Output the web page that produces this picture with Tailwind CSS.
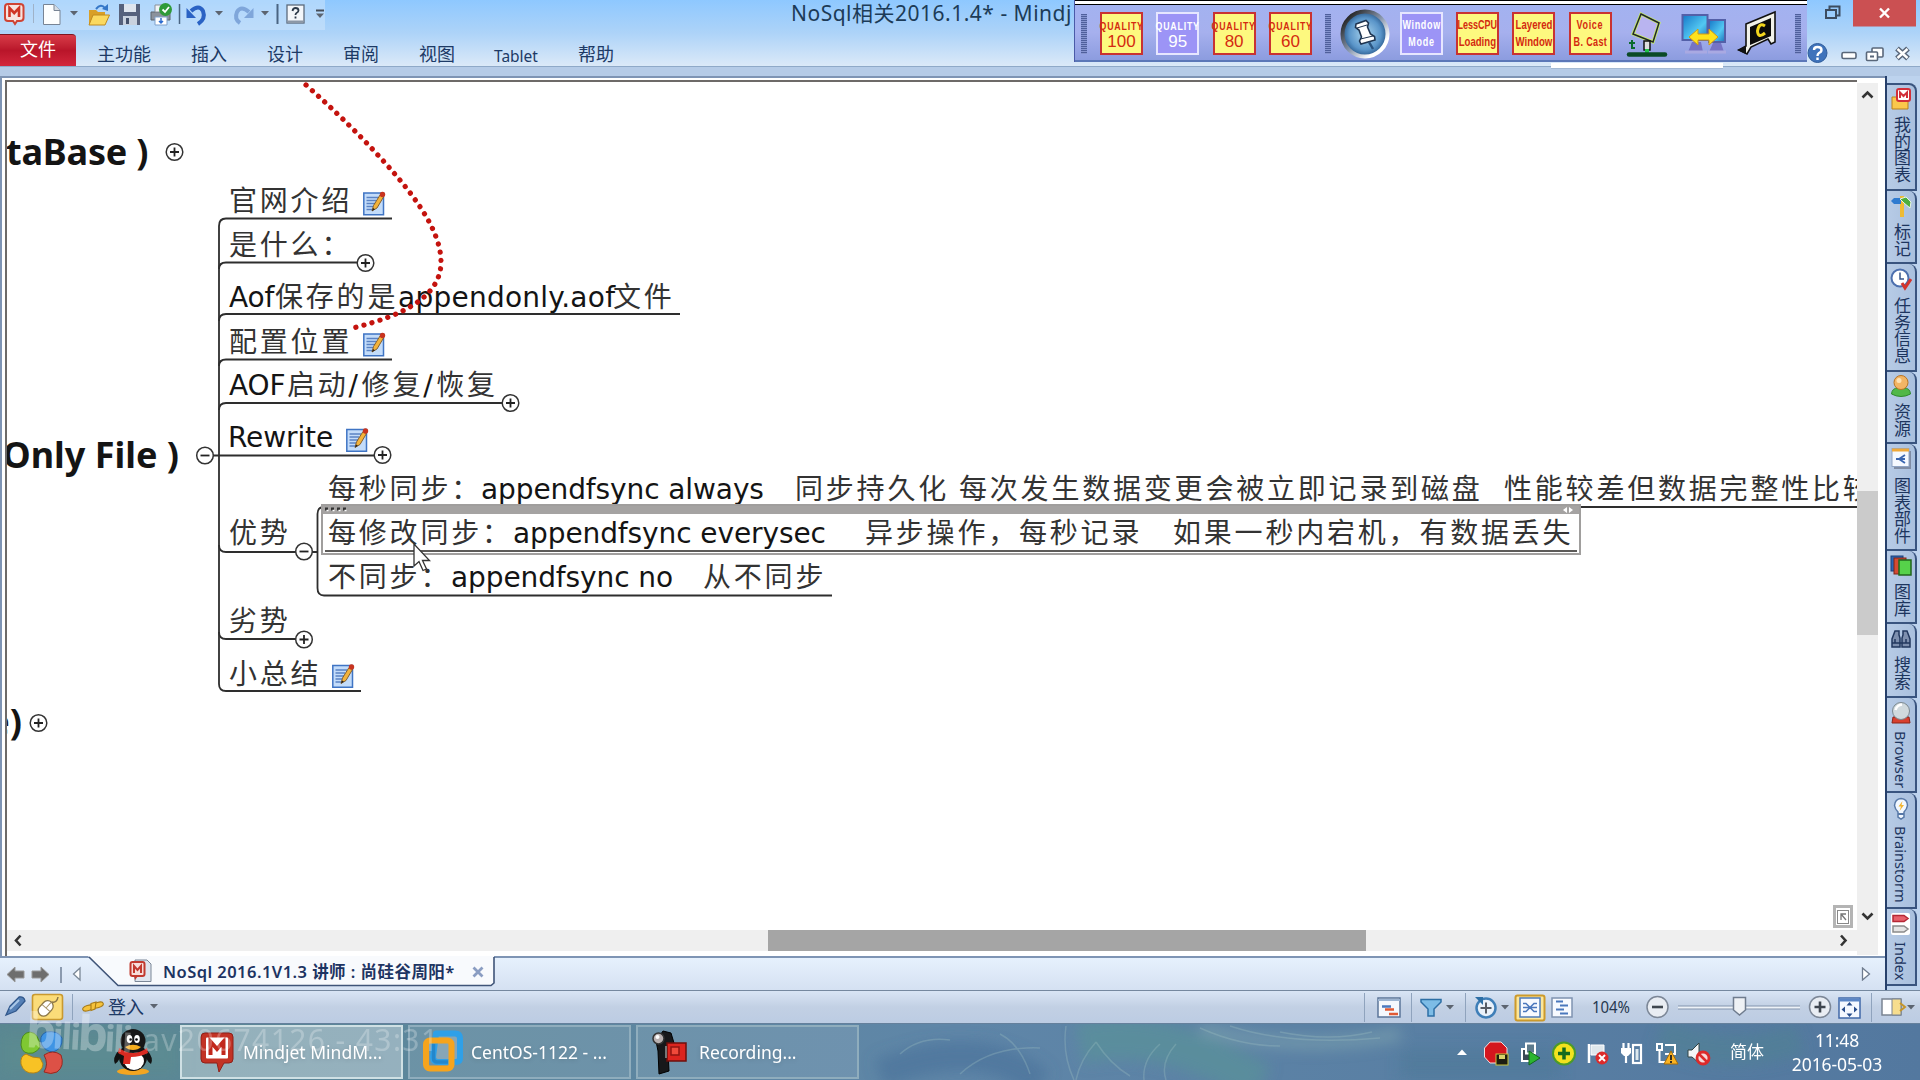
<!DOCTYPE html>
<html lang="zh-CN">
<head>
<meta charset="utf-8">
<title>NoSql相关2016.1.4* - Mindjet</title>
<script src="https://cdn.jsdelivr.net/npm/@tailwindcss/browser@4"></script>
</head>
<body class="w-[1920px] h-[1080px] overflow-hidden flex flex-col bg-[#c4d8ef] font-['Noto_Sans','Noto_Sans_CJK_SC',sans-serif] text-[#1d3a66]">

<svg width="0" height="0" class="absolute">
  <defs>
    <g id="plus"><circle r="8.3" fill="#fff" stroke="#333" stroke-width="1.5"/><path d="M-4.5 0H4.5M0-4.5V4.5" stroke="#222" stroke-width="1.8"/></g>
    <g id="minus"><circle r="8.3" fill="#fff" stroke="#333" stroke-width="1.5"/><path d="M-4.5 0H4.5" stroke="#222" stroke-width="1.8"/></g>
    <g id="note"><path d="M.8 1.5H20.5V23.200H.8Z" fill="#c3dcfa" stroke="#3f74c4" stroke-width="1.5"/><path d="M3.500 6H15M3.500 9H13M3.500 12H12M3.500 15H10M3.500 18H9" stroke="#5b83c4" stroke-width="1.3"/><path d="M9 19.500L10.500 14 17 3.500 20.500 5.500 14 16.500Z" fill="#f3b33b" stroke="#7a5526" stroke-width=".9"/><path d="M9 19.500L10 16.500 12 17.700Z" fill="#222"/><circle cx="19.500" cy="3" r="2.700" fill="#c8341f"/></g>
    <path id="drop" d="M0 0H8L4 4.500Z" fill="#5c6470"/>
    <radialGradient id="pinball"><stop offset="0" stop-color="#a9d4ee"/><stop offset=".7" stop-color="#5a95c9"/><stop offset="1" stop-color="#2a5a8c"/></radialGradient>
    <linearGradient id="ring" x1="0" y1="0" x2="1" y2="1"><stop offset="0.1" stop-color="#222"/><stop offset=".5" stop-color="#8796ad"/><stop offset=".8" stop-color="#fff"/></linearGradient>
    <linearGradient id="screen" x1="0" y1="0" x2="1" y2="1"><stop offset="0" stop-color="#1577c8"/><stop offset=".6" stop-color="#53c8f2"/><stop offset="1" stop-color="#1c6fb8"/></linearGradient>
  </defs>
</svg>

<!-- title bar and ribbon tabs -->
<header class="relative h-[66px] shrink-0 bg-linear-to-b from-[#8ec8ff] via-[#add3f8] to-[#dbe9f8]">
  <div class="h-[34px] flex items-start">
    <svg width="340" height="30" viewBox="0 0 340 30" class="shrink-0">
      <rect x="0" y="0" width="325" height="30" fill="#d6e8fa" opacity=".45"/>
      <path d="M8 4H20Q23.500 4 23.500 7V18Q23.500 21 20 21H17L15 24 13 21H8Q5 21 5 18V7Q5 4 8 4Z" fill="#f7e3df" stroke="#cf4434" stroke-width="2"/><path d="M9.500 17V8L14.200 13 19 8V17" fill="none" stroke="#cf3424" stroke-width="2.600"/>
      <path d="M33.500 4V23" stroke="#9fb2c8"/>
      <path d="M43.500 4.500H54L60 10.500V24.500H43.500Z" fill="#fdfefe" stroke="#788494"/><path d="M54 4.500V10.500H60" fill="#d5dde6" stroke="#788494"/>
      <use href="#drop" x="70" y="11"/>
      <path d="M89 10H96L98 12H105V24H89Z" fill="#d99f27"/><path d="M93 15H109.500L105 25H89Z" fill="#fbd960" stroke="#c08a1e"/><path d="M96 9Q101 3 105 8" fill="none" stroke="#3577c8" stroke-width="2"/><path d="M102 9L108 4V11Z" fill="#3577c8"/>
      <path d="M119 4H140V25H119Z" fill="#56617c"/><path d="M124 4H136V12H124Z" fill="#dfe5ee"/><path d="M123 16H137V25H123Z" fill="#c9d1de"/><path d="M126 18H129V24H126Z" fill="#44506a"/>
      <path d="M151 12H170V20H151Z" fill="#8b929c" stroke="#5d646d"/><path d="M155 5H166V12H155Z" fill="#f2f4f7" stroke="#8a9099"/><path d="M155 17H167V25H155Z" fill="#fff" stroke="#7fa1cc"/><path d="M161 18V23M159 21L161 23 163 21" stroke="#2b6bd0" fill="none" stroke-width="1.500"/><circle cx="165.500" cy="9.500" r="6.500" fill="#2f9a39"/><path d="M162.500 9.500L165 12 169 7" fill="none" stroke="#fff" stroke-width="1.800"/>
      <path d="M179.500 4V24" stroke="#4a6482" stroke-width="1.500"/>
      <path d="M191 11Q199 4 203 11 206 19 198 24" fill="none" stroke="#2a62c4" stroke-width="4"/><path d="M186.500 8V18H196Z" fill="#2a62c4"/>
      <use href="#drop" x="215" y="11"/>
      <path d="M249 12Q241 5 237 12 234 19 240 23" fill="none" stroke="#7fa6da" stroke-width="4"/><path d="M253.500 8V18H244Z" fill="#7fa6da"/>
      <use href="#drop" x="261" y="11"/>
      <path d="M277.500 4V24" stroke="#4a6482" stroke-width="2"/>
      <rect x="287" y="5" width="17" height="18" fill="#f3f6fa" stroke="#5c6a7c" stroke-width="1.300"/><path d="M287 21.500H304" stroke="#8b97a6" stroke-width="2"/><path d="M292.500 11Q293 8 295.500 8 298.500 8 298.500 10.500 298.500 12 296.500 13 295.500 13.600 295.500 15M295.500 16.500V18.500" fill="none" stroke="#2d3a4a" stroke-width="1.800"/>
      <path d="M316 10.500H324" stroke="#454d58" stroke-width="2"/><use href="#drop" x="316" y="13.500"/>
    </svg>
    <div class="ml-[451px] h-[30px] w-[283px] overflow-hidden text-[21px] leading-[27px] tracking-[0.5px] text-[#1c3b57] whitespace-pre">NoSql相关2016.1.4* - Mindj</div>
  </div>
  <nav class="h-[32px] flex items-end text-[18px] leading-[28px]">
    <div class="w-[76px] h-[32px] rounded-tr-[4px] border-t border-[#7d1520] bg-linear-to-b from-[#d83a48] via-[#b9152a] to-[#d3263c] text-white text-center leading-[28px]">文件</div>
    <div class="ml-[21px] h-[26px]">主功能</div>
    <div class="ml-[40px] h-[26px]">插入</div>
    <div class="ml-[40px] h-[26px]">设计</div>
    <div class="ml-[40px] h-[26px]">审阅</div>
    <div class="ml-[40px] h-[26px]">视图</div>
    <div class="ml-[39px] h-[26px] w-[44px] text-[15.5px] leading-[32px]">Tablet</div>
    <div class="ml-[40px] h-[26px]">帮助</div>
  </nav>

  <!-- floating recorder palette -->
  <div class="absolute left-[1074px] top-0 w-[733px] h-[62px] flex flex-col border-l border-[#4a5aa8]">
    <div class="h-[5px] shrink-0 border-t border-b border-black bg-white"></div>
    <div class="flex-1 flex items-center pt-[2px] pl-[6px] bg-linear-to-b from-[#a3b2f0] via-[#a6b0ee] to-[#8c9cdf] border-b-2 border-[#5b77b8] font-['Liberation_Sans',sans-serif]">
      <div class="w-[6px] h-[40px] bg-[repeating-linear-gradient(#4f5f9c_0_1px,#8795d0_1px_2px)]"></div>
      <div class="ml-[13px] flex gap-[13.3px] text-center text-[#d42a10]">
        <div class="w-[43px] h-[43px] bg-[#fdf97f] border-2 border-[#c93232] flex flex-col items-center"><span class="text-[11px] leading-[12px] mt-[6px] font-bold scale-x-80 tracking-[1px] whitespace-nowrap">QUALITY</span><span class="text-[17px] leading-[20px]">100</span></div>
        <div class="w-[43px] h-[43px] bg-[#9c94f6] border-2 border-[#e6e6ff] text-white flex flex-col items-center"><span class="text-[11px] leading-[12px] mt-[6px] font-bold scale-x-80 tracking-[1px] whitespace-nowrap">QUALITY</span><span class="text-[17px] leading-[20px]">95</span></div>
        <div class="w-[43px] h-[43px] bg-[#fdf97f] border-2 border-[#c93232] flex flex-col items-center"><span class="text-[11px] leading-[12px] mt-[6px] font-bold scale-x-80 tracking-[1px] whitespace-nowrap">QUALITY</span><span class="text-[17px] leading-[20px]">80</span></div>
        <div class="w-[43px] h-[43px] bg-[#fdf97f] border-2 border-[#c93232] flex flex-col items-center"><span class="text-[11px] leading-[12px] mt-[6px] font-bold scale-x-80 tracking-[1px] whitespace-nowrap">QUALITY</span><span class="text-[17px] leading-[20px]">60</span></div>
      </div>
      <div class="ml-[13px] w-[6px] h-[40px] bg-[repeating-linear-gradient(#4f5f9c_0_1px,#8795d0_1px_2px)]"></div>
      <svg class="ml-[9px] shrink-0" width="50" height="50" viewBox="0 0 50 50"><circle cx="25" cy="25" r="22.500" fill="url(#pinball)" stroke="url(#ring)" stroke-width="4"/><path d="M16 15L26 11.500 28.500 14 27.500 18 30.500 25 34.500 27.500 35 31 21 35 19.500 32 21.500 28 19 21 15.500 18.500Z" fill="#fff" stroke="#1e3450" stroke-width="1.600"/><path d="M17 19L27 16M20.500 30L33 27" stroke="#1e3450"/><path d="M29 33L33 40" stroke="#2a5480" stroke-width="2.500"/></svg>
      <div class="ml-[10px] flex gap-[13.3px] text-center text-[#d42a10] text-[12px] leading-[17px] font-bold">
        <div class="w-[43px] h-[43px] bg-[#9c94f6] border-2 border-[#e6e6ff] text-white flex flex-col items-center pt-[3px]"><span class="scale-x-75 tracking-[.9px] whitespace-nowrap">Window</span><span class="scale-x-75 tracking-[.9px]">Mode</span></div>
        <div class="w-[43px] h-[43px] bg-[#fdf97f] border-2 border-[#c93232] flex flex-col items-center pt-[3px]"><span class="scale-x-75 whitespace-nowrap">LessCPU</span><span class="scale-x-80 whitespace-nowrap">Loading</span></div>
        <div class="w-[43px] h-[43px] bg-[#fdf97f] border-2 border-[#c93232] flex flex-col items-center pt-[3px]"><span class="scale-x-80 whitespace-nowrap">Layered</span><span class="scale-x-80 whitespace-nowrap">Window</span></div>
        <div class="w-[43px] h-[43px] bg-[#fdf97f] border-2 border-[#c93232] flex flex-col items-center pt-[3px]"><span class="scale-x-75 tracking-[.9px]">Voice</span><span class="scale-x-75 tracking-[.5px] whitespace-nowrap">B. Cast</span></div>
      </div>
      <svg class="ml-[13px] shrink-0" width="44" height="48" viewBox="0 0 44 48"><path d="M16 4L34 13 28 32 8 24Z" fill="#b9b4f0" stroke="#c8f25a" stroke-width="3"/><path d="M16 4L34 13 28 32 8 24Z" fill="none" stroke="#20242c" stroke-width="1.500"/><path d="M19 31H25V40H19Z" fill="#ddd" stroke="#111" stroke-width="1.500"/><path d="M22 39V44" stroke="#21c44a" stroke-width="4"/><path d="M4 44.500H40" stroke="#0b4a26" stroke-width="4.500" stroke-linecap="round"/><path d="M7 30V38H10M4 33H10" stroke="#0b6b2e" stroke-width="2" fill="none"/></svg>
      <svg class="ml-[11px] shrink-0" width="48" height="48" viewBox="0 0 48 48"><rect x="2.500" y="5" width="25" height="25" fill="url(#screen)" stroke="#5360a8" stroke-width="2"/><rect x="29" y="10" width="16" height="22" fill="url(#screen)" stroke="#5360a8" stroke-width="2"/><path d="M12 32H21L23 42H8ZM33 33H41L44 42H29Z" fill="#7673c4"/><path d="M5 42H27M28 42H46" stroke="#a9a9e2" stroke-width="3"/><path d="M9 27L18 19V24H29V19L38 27 29 35V30H18V35Z" fill="#ffe21c" stroke="#d39a12"/></svg>
      <svg class="ml-[9px] shrink-0" width="44" height="48" viewBox="0 0 44 48"><path d="M9 14L38 2V32L34 34 31 29 14 37 10 44 2 40 9 36Z" fill="#f2f2ea" stroke="#111" stroke-width="1.600"/><path d="M13 17L34 8V26L13 35Z" fill="#0b0b0b"/><path d="M28 16Q22 12 20.500 21 21 29 28 23" fill="none" stroke="#f2d51d" stroke-width="3"/><path d="M0 40L9 36V44Z" fill="#111"/></svg>
      <div class="ml-auto mr-[6px] w-[6px] h-[40px] bg-[repeating-linear-gradient(#4f5f9c_0_1px,#8795d0_1px_2px)]"></div>
    </div>
  </div>

  <!-- window controls -->
  <svg class="absolute left-[1807px] top-0" width="113" height="66" viewBox="1807 0 113 66">
    <path d="M1829.500 9V6.500H1839.500V15.500H1837" fill="none" stroke="#3c4c60" stroke-width="2"/><rect x="1826" y="10" width="10" height="8" fill="none" stroke="#3c4c60" stroke-width="2"/>
    <rect x="1853" y="0" width="63" height="26.500" fill="#cb5052"/><path d="M1880 8.500L1889 17.500M1889 8.500L1880 17.500" stroke="#fff" stroke-width="2.400"/>
    <circle cx="1817.500" cy="53" r="9.500" fill="#3f73bb" stroke="#2f5c9c"/><path d="M1814 50Q1814 47 1817.500 47 1821.500 47 1821.500 50 1821.500 52 1819 53 1817.500 54 1817.500 56M1817.500 57.500V60" fill="none" stroke="#fff" stroke-width="2.400"/>
    <rect x="1842" y="52.500" width="14" height="6" rx="1.500" fill="#fff" stroke="#59677a" stroke-width="1.600"/>
    <rect x="1872" y="48" width="11" height="9" rx="1" fill="#fff" stroke="#59677a" stroke-width="1.600"/><rect x="1866.500" y="52" width="11" height="8.500" rx="1" fill="#fff" stroke="#59677a" stroke-width="1.600"/><rect x="1870" y="55.500" width="4" height="2" fill="#59677a"/>
    <path d="M1897 48.500L1908 58.500M1908 48.500L1897 58.500" stroke="#59677a" stroke-width="5.500"/><path d="M1897.500 49L1907.500 58M1907.500 49L1897.500 58" stroke="#fff" stroke-width="2.400"/>
  </svg>
</header>

<!-- strip under the ribbon -->
<div class="relative h-[10px] shrink-0 border-t border-[#8fa9c8] bg-[#b5cbe7]">
  <div class="absolute left-[1551px] -top-[4px] w-[172px] h-[6px] bg-white border-b border-[#a3b9d4]"></div>
</div>

<!-- document area -->
<div class="h-[914px] shrink-0 flex">
  <div class="w-[1887px] flex flex-col border-r-2 border-[#27406b]">
    <div class="h-[882px] shrink-0 border-t-2 border-l-2 border-b-2 border-[#7e94b4] bg-white pt-[2px] pl-[3px] flex">
      <div class="w-[1852px] flex flex-col border-t-2 border-l-2 border-[#6d6a68]">
        <!-- mind map canvas -->
        <div class="relative h-[848px] shrink-0 overflow-hidden bg-white text-[#141414]">
          <div class="absolute -left-[1px] top-[46px] w-[142px] text-right text-[36px] leading-[48px] font-bold tracking-[-0.2px] whitespace-pre">taBase )</div>
          <div class="absolute -left-[28px] top-[349px] w-[200px] text-right text-[36px] leading-[48px] font-bold whitespace-pre">Only File )</div>
          <div class="absolute -left-[85px] top-[616px] w-[100px] text-right text-[36px] leading-[48px] font-bold whitespace-pre">e)</div>

          <div class="font-['DejaVu_Sans','Noto_Sans_CJK_SC',sans-serif] text-[28px] leading-[36px] tracking-[-0.1px] whitespace-pre">
            <div class="absolute left-[222px] top-[102px] tracking-[2.8px] text-[#333]">官网介绍</div>
            <div class="absolute left-[222px] top-[146px] tracking-[2.8px] text-[#333]">是什么：</div>
            <div class="absolute left-[222px] top-[198px] flex"><span class="w-[46px]">Aof</span><span class="w-[123px] tracking-[2.8px] text-[#333]">保存的是</span><span class="w-[215px] tracking-[0.25px]">appendonly.aof</span><span class="tracking-[2.8px] text-[#333]">文件</span></div>
            <div class="absolute left-[222px] top-[243px] tracking-[2.8px] text-[#333]">配置位置</div>
            <div class="absolute left-[222px] top-[286px] flex"><span class="w-[58px]">AOF</span><span class="tracking-[2.8px] text-[#333]">启动</span><span class="w-[13px]">/</span><span class="tracking-[2.8px] text-[#333]">修复</span><span class="w-[13px]">/</span><span class="tracking-[2.8px] text-[#333]">恢复</span></div>
            <div class="absolute left-[221px] top-[338px]">Rewrite</div>
            <div class="absolute left-[222px] top-[434px] tracking-[2.8px] text-[#333]">优势</div>
            <div class="absolute left-[222px] top-[522px] tracking-[2.8px] text-[#333]">劣势</div>
            <div class="absolute left-[222px] top-[575px] tracking-[2.8px] text-[#333]">小总结</div>
            <div class="absolute left-[321px] top-[390px] flex"><span class="w-[153px] tracking-[2.8px] text-[#333]">每秒同步：</span><span class="w-[314px]">appendfsync always</span><span class="w-[164px] tracking-[2.8px] text-[#333]">同步持久化</span><span class="w-[545px] tracking-[2.8px] text-[#333]">每次发生数据变更会被立即记录到磁盘</span><span class="tracking-[2.8px] text-[#333]">性能较差但数据完整性比较</span></div>
            <div class="absolute left-[321px] top-[478px] flex"><span class="w-[123px] tracking-[2.8px] text-[#333]">不同步：</span><span class="w-[252px]">appendfsync no</span><span class="tracking-[2.8px] text-[#333]">从不同步</span></div>
          </div>

          <svg class="absolute left-0 top-0" width="1850" height="848" viewBox="7 82 1850 848">
            <g fill="none" stroke="#2e2e2e" stroke-width="1.800">
              <path d="M392 218.500H226Q219 218.500 219 226V684Q219 691 226 691H361"/>
              <path d="M219 269Q219 262.500 226 262.500H357"/>
              <path d="M219 321Q219 314 226 314H680"/>
              <path d="M219 366Q219 359.500 226 359.500H392"/>
              <path d="M219 410Q219 403 226 403H502"/>
              <path d="M213 455.500H374"/>
              <path d="M219 545Q219 552 226 552H317"/>
              <path d="M219 632Q219 639 226 639H296"/>
              <path d="M1857 507H324Q317.500 507 317.500 514V588Q317.500 595.500 324 595.500H832"/>
            </g>
            <path d="M306 85C350 124 382 158 404 185C428 215 441 240 441 262C441 298 400 316 355 327.500" fill="none" stroke="#c4130e" stroke-width="5.200" stroke-linecap="round" stroke-dasharray="0.100 8.250"/>
            <use href="#plus" x="174.500" y="152"/><use href="#plus" x="365.500" y="263"/><use href="#plus" x="510.500" y="403"/>
            <use href="#minus" x="205" y="455.500"/><use href="#plus" x="382.500" y="455"/><use href="#minus" x="304" y="551.500"/>
            <use href="#plus" x="304" y="639.500"/><use href="#plus" x="38.500" y="723"/>
            <use href="#note" x="363" y="191.500"/><use href="#note" x="363" y="332.500"/><use href="#note" x="346" y="428"/><use href="#note" x="332" y="664"/>
          </svg>

          <!-- selected topic -->
          <div class="absolute left-[314px] top-[422px] w-[1260px] h-[51px] border-2 border-[#a09e9d] bg-white flex flex-col">
            <div class="h-[8px] shrink-0 bg-[#a5a3a2] flex justify-between">
              <svg width="26" height="8" viewBox="0 0 26 8"><path d="M2 3H24" stroke="#333" stroke-width="3" stroke-dasharray="3 3"/><path d="M3.500 4.500H25" stroke="#fff" stroke-width="1.500" stroke-dasharray="2 4"/></svg>
              <svg width="20" height="8" viewBox="0 0 20 8"><path d="M8 1V7L4 4ZM10 1V7L14 4Z" fill="#fff"/></svg>
            </div>
            <div class="h-[35px] shrink-0 pt-[2px] pl-[5px] flex font-['DejaVu_Sans','Noto_Sans_CJK_SC',sans-serif] text-[28px] leading-[36px] tracking-[-0.1px] whitespace-pre">
              <span class="w-[185px] tracking-[2.8px] text-[#333]">每修改同步：</span><span class="w-[352px]">appendfsync everysec</span><span class="w-[308px] tracking-[2.8px] text-[#333]">异步操作，每秒记录</span><span class="tracking-[2.8px] text-[#333]">如果一秒内宕机，有数据丢失</span>
            </div>
            <div class="mt-[1px] mx-[2px] h-[2px] bg-[#5c5a58]"></div>
          </div>

          <svg class="absolute left-[406px] top-[461px]" width="20" height="30" viewBox="0 0 20 30"><path d="M1 1V23L6 18.500 10 27.500 13.500 26 9.500 17.500H16.500Z" fill="#fff" stroke="#333" stroke-width="1.300"/></svg>
          <div class="absolute left-[1826px] top-[823px] w-[20px] h-[23px] border-[3px] border-[#b4b4b4] bg-white flex items-center justify-center"><svg width="12" height="14" viewBox="0 0 12 14"><rect x=".5" y=".5" width="11" height="13" fill="none" stroke="#888"/><path d="M4 10V4H9M4 4L9 10" fill="none" stroke="#777" stroke-width="1.300"/></svg></div>
        </div>
        <!-- horizontal scroll bar -->
        <div class="h-[21px] flex items-center bg-[#efefef]">
          <svg class="shrink-0" width="761" height="21" viewBox="0 0 761 21"><path d="M13.500 5.500L9 10.500 13.500 15.500" fill="none" stroke="#333" stroke-width="2.600"/></svg>
          <div class="w-[598px] h-[21px] bg-[#a5a5a5]"></div>
          <svg class="shrink-0" width="490" height="21" viewBox="0 0 490 21"><path d="M475 5.500L479.500 10.500 475 15.500" fill="none" stroke="#333" stroke-width="2.600"/></svg>
        </div>
      </div>
      <!-- vertical scroll bar -->
      <div class="w-[21px] h-[872px] mt-[3px] bg-[#efefef] flex flex-col">
        <svg class="shrink-0" width="21" height="408" viewBox="0 0 21 408"><path d="M5.500 14.500L10.500 9.500 15.500 14.500" fill="none" stroke="#333" stroke-width="2.600"/></svg>
        <div class="shrink-0 h-[144px] bg-[#cbcbcb]"></div>
        <svg class="shrink-0" width="21" height="300" viewBox="0 0 21 300"><path d="M5.500 278.500L10.500 283.500 15.500 278.500" fill="none" stroke="#333" stroke-width="2.600"/></svg>
      </div>
    </div>
    <!-- document tabs -->
    <div class="h-[32px] flex items-start bg-linear-to-b from-[#e6f1fd] to-[#d5e1f2]">
      <svg width="88" height="32" viewBox="0 0 88 32" class="shrink-0"><path d="M7 16.500L15 9V13H24V20H15V24Z" fill="#6e6e6e" stroke="#999"/><path d="M49 16.500L41 9V13H32V20H41V24Z" fill="#6e6e6e" stroke="#999"/><path d="M61 9V25" stroke="#6f7f96" stroke-width="1.500"/><path d="M80 10V22L73.500 16Z" fill="#fff" stroke="#7a8796" stroke-width="1.300"/></svg>
      <div class="relative w-[408px] h-[29px] flex items-start text-[#1d3462]">
        <svg class="absolute left-0 -top-[2px]" width="408" height="31" viewBox="0 0 408 31"><path d="M0 0L30 29.500H403L406 27V0Z" fill="#f8fafd"/><path d="M1 1L30 29.500H403L406 27V1" fill="none" stroke="#3f5478" stroke-width="1.600"/></svg>
        <svg class="relative ml-[41px] mt-[1px] shrink-0" width="24" height="24" viewBox="0 0 24 24"><path d="M6 1H18L22 5V22.500H6Z" fill="#dfe6ef" stroke="#7b8797"/><rect x="1.500" y="3" width="14" height="14" rx="2" fill="#f7dedb" stroke="#c23a2f" stroke-width="2"/><path d="M5 14V7L8.500 11 12 7V14" fill="none" stroke="#c23a2f" stroke-width="2"/><path d="M5 17L6 21 9 17Z" fill="#c23a2f"/></svg>
        <span class="relative ml-[10px] w-[309px] text-[16.500px] leading-[28px] font-semibold whitespace-pre tracking-[0.45px]">NoSql 2016.1V1.3 讲师 : 尚硅谷周阳*</span>
        <svg class="relative mt-[8px] shrink-0" width="12" height="12" viewBox="0 0 12 12"><path d="M1.500 1.500L10.500 10.500M10.500 1.500L1.500 10.500" stroke="#8a9dc2" stroke-width="2.800"/></svg>
      </div>
      <svg class="ml-auto mr-[14px] mt-[9px]" width="10" height="14" viewBox="0 0 10 14"><path d="M1.500 1V13L8.500 7Z" fill="#fff" stroke="#6f7c8e" stroke-width="1.300"/></svg>
    </div>
  </div>
  <!-- task pane tabs -->
  <aside class="w-[33px] pt-[7px] flex flex-col text-[17px] bg-[#bdd3ee] text-[#1d355e]">
    <div class="w-[30px] h-[108px] border-2 border-l-0 border-[#39547f] rounded-tr-[8px] bg-linear-to-r from-[#b7cbe6] to-[#a9c0de] flex flex-col items-center pt-[2px]">
      <svg class="shrink-0" width="22" height="24" viewBox="0 0 22 24"><path d="M2 10H9L11 12H18V22H2Z" fill="#fbc84c" stroke="#b9811f"/><rect x="7" y="2" width="13" height="12" rx="2" fill="#fff" stroke="#d2303a" stroke-width="2"/><path d="M10 11V5.500L13.500 9 17 5.500V11" fill="none" stroke="#d2303a" stroke-width="2"/></svg>
      <span class="mt-[5px] [writing-mode:vertical-rl] leading-[20px] tracking-[-0.3px] whitespace-nowrap">我的图表</span></div>
    <div class="w-[30px] h-[73px] border-2 border-l-0 border-t-0 border-[#39547f] rounded-tr-[8px] bg-linear-to-r from-[#b7cbe6] to-[#a9c0de] flex flex-col items-center pt-[3px]">
      <svg class="shrink-0" width="22" height="24" viewBox="0 0 22 24"><path d="M10 2H14V23H10Z" fill="#eebb34"/><path d="M1 7L4 4H11V10H4Z" fill="#2f7bd0"/><path d="M10 5L16 3 21 8 20 14 14 9Z" fill="#4cae3e" stroke="#e9f5e5"/></svg>
      <span class="mt-[5px] [writing-mode:vertical-rl] leading-[20px] tracking-[-0.3px] whitespace-nowrap">标记</span></div>
    <div class="w-[30px] h-[108px] border-2 border-l-0 border-t-0 border-[#39547f] rounded-tr-[8px] bg-linear-to-r from-[#b7cbe6] to-[#a9c0de] flex flex-col items-center pt-[4px]">
      <svg class="shrink-0" width="22" height="24" viewBox="0 0 22 24"><circle cx="10" cy="10" r="8.500" fill="#fff" stroke="#4c6fae" stroke-width="2"/><path d="M10 4.500V11H14" fill="none" stroke="#37558c" stroke-width="1.500"/><path d="M12 15L15 20 21 11" fill="none" stroke="#d4352d" stroke-width="3"/></svg>
      <span class="mt-[5px] [writing-mode:vertical-rl] leading-[20px] tracking-[-0.3px] whitespace-nowrap">任务信息</span></div>
    <div class="w-[30px] h-[72px] border-2 border-l-0 border-t-0 border-[#39547f] rounded-tr-[8px] bg-linear-to-r from-[#b7cbe6] to-[#a9c0de] flex flex-col items-center pt-[2px]">
      <svg class="shrink-0" width="22" height="24" viewBox="0 0 22 24"><path d="M1.500 20Q2 14 8 14H14Q20 14 20.500 20 11 25 1.500 20Z" fill="#51b848" stroke="#2e8a2c"/><circle cx="11" cy="8.500" r="7" fill="#f2b565" stroke="#b97423"/><circle cx="9" cy="6.500" r="2.500" fill="#fde2b4"/></svg>
      <span class="mt-[5px] [writing-mode:vertical-rl] leading-[20px] tracking-[-0.3px] whitespace-nowrap">资源</span></div>
    <div class="w-[30px] h-[107px] border-2 border-l-0 border-t-0 border-[#39547f] rounded-tr-[8px] bg-linear-to-r from-[#b7cbe6] to-[#a9c0de] flex flex-col items-center pt-[3px]">
      <svg class="shrink-0" width="22" height="24" viewBox="0 0 22 24"><rect x="4" y="4" width="17" height="18" fill="#7f8ca4"/><rect x="2" y="1.500" width="17" height="18" fill="#f5f9ff" stroke="#8fa4c4"/><path d="M2 3H19" stroke="#efa93b" stroke-width="3"/><path d="M6 12H9M9 12L15 8M9 12H15M9 12L15 16" stroke="#3a66b0" stroke-width="1.800"/></svg>
      <span class="mt-[6px] [writing-mode:vertical-rl] leading-[20px] tracking-[-0.3px] whitespace-nowrap">图表部件</span></div>
    <div class="w-[30px] h-[73px] border-2 border-l-0 border-t-0 border-[#39547f] rounded-tr-[8px] bg-linear-to-r from-[#b7cbe6] to-[#a9c0de] flex flex-col items-center pt-[3px]">
      <svg class="shrink-0" width="22" height="24" viewBox="0 0 22 24"><rect x="1" y="2" width="12" height="15" fill="#2b66b6" stroke="#1c3f78"/><rect x="4" y="4" width="12" height="16" fill="#d54a33" stroke="#7d2418"/><rect x="9" y="6" width="12" height="15" fill="#56d24a" stroke="#22641d" stroke-width="1.500"/></svg>
      <span class="mt-[5px] [writing-mode:vertical-rl] leading-[20px] tracking-[-0.3px] whitespace-nowrap">图库</span></div>
    <div class="w-[30px] h-[74px] border-2 border-l-0 border-t-0 border-[#39547f] rounded-tr-[8px] bg-linear-to-r from-[#b7cbe6] to-[#a9c0de] flex flex-col items-center pt-[3px]">
      <svg class="shrink-0" width="22" height="24" viewBox="0 0 22 24"><path d="M5 4H9V8L10 11V20H2V12Z" fill="#7d8fae" stroke="#22385f" stroke-width="1.500"/><path d="M13 4H17L20 12V20H12V11L13 8Z" fill="#7d8fae" stroke="#22385f" stroke-width="1.500"/><path d="M2 16H20M5 12V16M16 12V16" stroke="#22385f" stroke-width="1.500"/></svg>
      <span class="mt-[5px] [writing-mode:vertical-rl] leading-[20px] tracking-[-0.3px] whitespace-nowrap">搜索</span></div>
    <div class="w-[30px] h-[95px] border-2 border-l-0 border-t-0 border-[#39547f] rounded-tr-[8px] bg-linear-to-r from-[#b7cbe6] to-[#a9c0de] flex flex-col items-center pt-[3px]">
      <svg class="shrink-0" width="22" height="24" viewBox="0 0 22 24"><path d="M3 16H19L20 22H2Z" fill="#d8402f" stroke="#8e2519"/><circle cx="11" cy="10" r="8.500" fill="#d0d9dd" stroke="#7b8890"/><path d="M5.500 9Q7 4 12 3.500" fill="none" stroke="#fff" stroke-width="2.500"/></svg>
      <span class="mt-[6px] [writing-mode:vertical-rl] text-[14.500px] leading-[20px] tracking-[0.2px] whitespace-nowrap">Browser</span></div>
    <div class="w-[30px] h-[116px] border-2 border-l-0 border-t-0 border-[#39547f] rounded-tr-[8px] bg-linear-to-r from-[#b7cbe6] to-[#a9c0de] flex flex-col items-center pt-[4px]">
      <svg class="shrink-0" width="22" height="24" viewBox="0 0 22 24"><path d="M11 1.500Q17.500 2 17.500 8.500 17 12 14 15V20L11 22 8 20V15Q5 12 4.500 8.500 5 2 11 1.500Z" fill="#f2f8ff" stroke="#5879a8" stroke-width="1.500"/><path d="M12.500 4L8.500 9.500H11L9.500 14 14 8H11.500Z" fill="#f3b42e"/><path d="M8 17H14" stroke="#5879a8" stroke-width="2"/></svg>
      <span class="mt-[5px] [writing-mode:vertical-rl] text-[14.500px] leading-[20px] whitespace-nowrap">Brainstorm</span></div>
    <div class="w-[30px] h-[77px] border-2 border-l-0 border-t-0 border-[#39547f] rounded-tr-[8px] bg-linear-to-r from-[#b7cbe6] to-[#a9c0de] flex flex-col items-center pt-[3px]">
      <svg class="shrink-0" width="22" height="24" viewBox="0 0 22 24"><rect x="1" y="1" width="19" height="22" rx="2" fill="#fff"/><path d="M3 3.500H14L18 6.500 14 9.500H3Z" fill="#e7606b" stroke="#b52734" stroke-width="1.500"/><path d="M3 14H14L18 17 14 20H3Z" fill="#e4e4e4" stroke="#8a8a8a" stroke-width="1.500"/></svg>
      <span class="mt-[6px] [writing-mode:vertical-rl] text-[14.500px] leading-[20px] whitespace-nowrap">Index</span></div>
  </aside>
</div>

<!-- status bar -->
<div class="h-[34px] shrink-0 border-t border-b border-t-[#75889f] border-b-[#65809c] bg-linear-to-b from-[#d9e5f5] via-[#c2d0e4] to-[#bccce3] flex items-center justify-between">
  <div class="flex items-center">
    <svg width="108" height="32" viewBox="0 991 108 32"><path d="M6 1015L10 1006 19 997Q24 996 25 1001L16 1011Z" fill="#5580b6" stroke="#31588c" stroke-width="1.300"/><path d="M10 1009L19 1000" stroke="#a9c7e8" stroke-width="2"/><rect x="32.500" y="994.500" width="30" height="25" rx="2.500" fill="#fbdc79" stroke="#c9992f" stroke-width="1.600"/><g transform="rotate(42 46 1008)"><rect x="40.500" y="1000" width="11" height="17" rx="5.500" fill="#fff" stroke="#8b7647" stroke-width="1.300"/><path d="M40.500 1008H51.500M46 1000V1008" stroke="#a89468" stroke-width="1"/></g><path d="M52 1002Q57 1003 58 997" fill="none" stroke="#8b7647" stroke-width="1.500"/><path d="M72.500 994V1020" stroke="#8fa3bd"/><g fill="#f6c33c" stroke="#a87b16" stroke-width="1.100"><ellipse cx="88" cy="1008" rx="5.500" ry="2.600" transform="rotate(-18 88 1008)"/><ellipse cx="98" cy="1005" rx="5.500" ry="2.600" transform="rotate(-18 98 1005)"/><path d="M91 1003.500L96 1002 95 1009 91 1010.500Z"/></g></svg>
    <span class="text-[18px] leading-[28px]">登入</span>
    <svg class="ml-[6px]" width="10" height="8"><use href="#drop" x="0" y="1"/></svg>
  </div>
  <svg width="560" height="32" viewBox="1360 991 560 32">
    <g stroke="#8fa3bd"><path d="M1364.500 993V1022M1411.500 993V1022M1465.500 993V1022M1871.500 993V1022"/></g>
    <rect x="1378" y="998" width="22" height="19" fill="#f4f8fd" stroke="#5b7599" stroke-width="1.500"/><path d="M1378 1000H1400" stroke="#9db5d2" stroke-width="2"/><path d="M1382 1006.500H1391" stroke="#4b78bd" stroke-width="2.500"/><path d="M1385 1009.500H1394M1389 1014H1398" stroke="#e05a35" stroke-width="2.500"/>
    <path d="M1421 999.500H1441V1002L1434 1009V1016H1428V1009L1421 1002Z" fill="#7dbce6" stroke="#2d6fa5" stroke-width="1.500"/><use href="#drop" x="1446" y="1005"/>
    <circle cx="1486" cy="1008" r="9.500" fill="#e9f1fa" stroke="#3f7fb8" stroke-width="2.500"/><path d="M1475 997H1483V1005Z" fill="#2d6fa5"/><path d="M1480.500 1008H1491.500M1486 1002.500V1013.500" stroke="#555c66" stroke-width="2"/><use href="#drop" x="1501" y="1005"/>
    <rect x="1515.500" y="995.500" width="29" height="25" rx="2" fill="#fce79b" stroke="#cc9a2b" stroke-width="2"/><rect x="1520" y="998" width="20" height="19" fill="#f7faff" stroke="#4d7bb8" stroke-width="1.500"/><path d="M1523 1003.500H1526L1530 1007.500M1523 1011.500H1526L1530 1007.500M1537 1003.500H1534L1530 1007.500M1537 1011.500H1534L1530 1007.500M1523 1007.500H1537" fill="none" stroke="#4b78bd" stroke-width="1.500"/>
    <rect x="1552" y="998" width="20" height="19" fill="#f7faff" stroke="#7f93b0" stroke-width="1.500"/><path d="M1556 1001.500H1563M1560 1005.500H1568M1556 1009.500H1564M1560 1013.500H1568" stroke="#4b78bd" stroke-width="1.800"/>
    <circle cx="1657.500" cy="1007" r="10.500" fill="#e9edf3" stroke="#7c8797" stroke-width="1.500"/><path d="M1652 1007H1663" stroke="#3f464f" stroke-width="2.600"/>
    <path d="M1678 1007.500H1800" stroke="#8294ad" stroke-width="4"/><path d="M1678 1007.500H1800" stroke="#edf2f8" stroke-width="2"/><path d="M1733.500 997.500H1745.500V1010L1739.500 1015 1733.500 1010Z" fill="#eef1f5" stroke="#6f7c8e" stroke-width="1.500"/>
    <circle cx="1820" cy="1007" r="10.500" fill="#e9edf3" stroke="#7c8797" stroke-width="1.500"/><path d="M1814.500 1007H1825.500M1820 1001.500V1012.500" stroke="#3f464f" stroke-width="2.600"/>
    <rect x="1839" y="998" width="21" height="20" fill="#f4f8ff" stroke="#4068a8" stroke-width="1.500"/><path d="M1839 1000H1860" stroke="#5b86c6" stroke-width="3"/><path d="M1849.500 1002L1852.500 1005.500H1846.500ZM1849.500 1017L1852.500 1013.500H1846.500ZM1841.500 1009.500L1845 1006.500V1012.500ZM1857.500 1009.500L1854 1006.500V1012.500Z" fill="#274c8c"/>
    <rect x="1882" y="999" width="19" height="16" fill="#fff" stroke="#7a8492" stroke-width="1.500"/><path d="M1892 999H1901V1015H1892Z" fill="#f6dd8e" stroke="#7a8492"/><path d="M1900 1003L1905 1007 1900 1011" fill="none" stroke="#c6952a" stroke-width="2"/><use href="#drop" x="1907" y="1005"/>
    <text x="1592" y="1013" font-size="16" textLength="38" lengthAdjust="spacingAndGlyphs" fill="#26384f">104%</text>
  </svg>
</div>

<!-- taskbar -->
<footer class="relative h-[56px] shrink-0 bg-linear-to-r from-[#5a8792] via-[#5f86a8] to-[#53789f] text-white">
  <svg class="absolute inset-0" width="1920" height="56" viewBox="0 0 1920 56">
    <defs><filter id="soft"><feGaussianBlur stdDeviation="7"/></filter></defs>
    <g filter="url(#soft)" fill="none">
      <path d="M0 30H180" stroke="#5d9090" stroke-width="40" opacity=".5"/>
      <path d="M880 50Q980 10 1040 60" stroke="#4a7099" stroke-width="30" opacity=".6"/>
      <path d="M1080 20Q1160 0 1260 60" stroke="#5a9199" stroke-width="40" opacity=".7"/>
      <path d="M1200 5Q1300 30 1400 10" stroke="#82a6b0" stroke-width="12" opacity=".6"/>
      <path d="M1400 40H1560" stroke="#4b7895" stroke-width="30" opacity=".5"/>
      <path d="M1660 10Q1730 40 1800 15" stroke="#4f8391" stroke-width="30" opacity=".5"/>
    </g>
    <g fill="none" stroke="#a3c3c3" stroke-width="1.500" opacity=".3">
      <path d="M1066 2Q1062 30 1074 56M1096 18Q1080 36 1076 56M1096 18Q1110 40 1130 52M1200 4Q1240 22 1280 22M1230 2Q1290 22 1380 14M1280 8Q1330 18 1372 8M1160 20Q1142 36 1144 56M1176 20Q1160 38 1166 56M900 30Q920 12 950 16M960 50Q990 22 1040 24M1000 10Q1020 20 1030 50"/>
    </g>
  </svg>
  <div class="relative h-[56px] flex items-center text-[17.500px] whitespace-pre">
    <svg class="shrink-0 mr-[2px]" width="178" height="56" viewBox="0 1024 178 56">
      <path d="M40 1047Q39 1033 30 1032 21 1033 21 1045 22 1055 33 1053Q38 1051 40 1047Z" fill="#7fc832" stroke="#4c8a1c"/><path d="M42 1045Q38 1036 46 1032 58 1030 62 1038 63 1049 53 1052 45 1051 42 1045Z" fill="#3f94e4" stroke="#2563a8"/><path d="M40 1058Q32 1058 26 1054 20 1056 21 1064 24 1074 34 1073 42 1072 43 1064Z" fill="#f8c225" stroke="#b88412"/><path d="M44 1055Q53 1049 61 1055 65 1066 57 1072 51 1075 44 1072 49 1064 44 1055Z" fill="#dd5146" stroke="#982820"/>
      <ellipse cx="133" cy="1071.500" rx="16" ry="3.500" fill="#f3a521"/><path d="M119 1050Q112 1058 115 1064 118 1062 120 1058ZM147 1050Q154 1058 151 1064 148 1062 146 1058Z" fill="#111"/><ellipse cx="133" cy="1057" rx="14" ry="14" fill="#111"/><ellipse cx="134" cy="1061" rx="10" ry="9" fill="#fff"/><ellipse cx="133" cy="1041" rx="12.500" ry="12" fill="#161616"/><ellipse cx="129.500" cy="1039" rx="2.800" ry="4" fill="#fff"/><ellipse cx="137" cy="1039" rx="2.800" ry="4" fill="#fff"/><circle cx="130.500" cy="1039.500" r="1.300"/><circle cx="136.500" cy="1039.500" r="1.300"/><path d="M125 1047Q133 1042.500 141 1047 138 1050 133 1050 128 1050 125 1047Z" fill="#f5ad1e"/><path d="M119 1048Q133 1058 147 1048L148 1053Q140 1057 131 1057L130 1064H123L124 1056 118 1053Z" fill="#d92b22"/>
    </svg>
    <div class="w-[223px] h-[54px] border-2 border-[#cfe0e4] bg-white/35 flex items-center pl-[16px]">
      <svg class="shrink-0" width="38" height="44" viewBox="0 0 38 44"><path d="M7 3H31Q35 3 35 7V29Q35 33 31 33H26L21 42 19 33H7Q3 33 3 29V7Q3 3 7 3Z" fill="#c23325" stroke="#8e2018"/><rect x="8" y="7.500" width="22" height="21" rx="1" fill="#fff"/><path d="M12.500 25V11.500L19 19 25.500 11.500V25" fill="none" stroke="#c2281c" stroke-width="4"/></svg>
      <span class="ml-[7px] drop-shadow-sm">Mindjet MindM...</span>
    </div>
    <div class="ml-[5px] w-[223px] h-[54px] border-2 border-[#8fadbd] bg-white/10 flex items-center pl-[11px]">
      <svg class="shrink-0" width="44" height="46" viewBox="0 0 44 46"><path d="M15 4.500H34Q39 4.500 39 9.500V29Q39 33 35 33H17Q12 33 12 28Z" fill="#b9cbd6" fill-opacity=".35" stroke="#2fa0e8" stroke-width="6" stroke-linejoin="round"/><rect x="5" y="11.500" width="25.500" height="28" rx="4" fill="none" stroke="#f6a41d" stroke-width="6"/><path d="M12.500 15V29Q12.500 33 16 33H27" fill="none" stroke="#2387cc" stroke-width="3.500"/></svg>
      <span class="ml-[6px] drop-shadow-sm">CentOS-1122 - ...</span>
    </div>
    <div class="ml-[5px] w-[223px] h-[54px] border-2 border-[#8fadbd] bg-white/10 flex items-center pl-[13px]">
      <svg class="shrink-0" width="40" height="46" viewBox="0 0 40 46"><path d="M5 12L12 2 20 4 23 14 17 22 18 42 8 45 7 22Z" fill="#17181a" stroke="#000"/><circle cx="7.500" cy="9.500" r="5.500" fill="#b9b1b1" stroke="#333" stroke-width="1.500"/><circle cx="6.500" cy="8" r="2" fill="#fff"/><rect x="16" y="14" width="19" height="18" fill="#dc241e" stroke="#6e0f0c" stroke-width="1.500"/><rect x="20" y="18" width="8" height="8" fill="#f04a3a" stroke="#8e1510" stroke-width="1.500"/><path d="M15 17V29" stroke="#777" stroke-width="2"/></svg>
      <span class="ml-[8px] drop-shadow-sm">Recording...</span>
    </div>
    <svg class="ml-auto shrink-0" width="268" height="56" viewBox="1455 1024 268 56">
      <path d="M1459 1055L1464 1049.500 1469 1055Z" fill="#fff"/>
      <path d="M1492 1042H1503L1509 1048V1057L1503 1063H1492L1486.500 1057V1048Z" fill="#d4161e" stroke="#f2dede"/><rect x="1498" y="1054" width="12" height="11" fill="#1c1c10" stroke="#c9c23a"/><path d="M1501 1055V1059H1507V1055" fill="#d9d36a"/>
      <rect x="1524" y="1049" width="12" height="12" fill="#3a4a55" stroke="#fff" stroke-width="2"/><rect x="1528" y="1043.500" width="9" height="10" fill="#5d7a8c" stroke="#fff" stroke-width="2"/><path d="M1531 1051L1542 1058 1531 1065Z" fill="#2bb52f" stroke="#12691a"/>
      <circle cx="1566" cy="1053.500" r="11" fill="#f3e21e" stroke="#4c9a28" stroke-width="2"/><path d="M1560 1053.500H1572M1566 1047.500V1059.500" stroke="#146a1e" stroke-width="3.500"/>
      <path d="M1591 1044V1063" stroke="#fff" stroke-width="2.500"/><path d="M1593 1045H1606V1055H1593Z" fill="#dfe7ec" stroke="#fff"/><circle cx="1604" cy="1058" r="6.500" fill="#dd2a2a"/><path d="M1601 1055L1607 1061M1607 1055L1601 1061" stroke="#fff" stroke-width="2"/>
      <path d="M1625.500 1043V1048M1630.500 1043V1048" stroke="#fff" stroke-width="2.200"/><path d="M1623 1048H1633V1053L1630 1056H1626L1623 1053Z" fill="#fff"/><path d="M1628 1055V1063" stroke="#fff" stroke-width="2.200"/><rect x="1635" y="1045" width="8" height="18" fill="none" stroke="#fff" stroke-width="2.200"/><rect x="1637.500" y="1049" width="3" height="11" fill="#dce8ee"/>
      <path d="M1659 1044H1664V1050H1659ZM1661.500 1050V1062H1672M1667 1045H1677V1054H1667" stroke="#fff" stroke-width="2" fill="none"/><path d="M1673 1051L1680 1064H1666Z" fill="#fbb321" stroke="#a66c08"/><path d="M1673 1055V1060M1673 1061V1063" stroke="#222" stroke-width="1.800"/>
      <path d="M1690 1050H1694L1701 1043V1063L1694 1057H1690Z" fill="#f3f6f7" stroke="#344"/><circle cx="1705" cy="1058" r="6" fill="#f6d9d9" stroke="#dd2a2a" stroke-width="2.800"/><path d="M1701 1054L1709 1062" stroke="#dd2a2a" stroke-width="2.500"/>
    </svg>
    <span class="ml-[9px] w-[36px] text-[17px]">简体</span>
    <div class="ml-[18px] mr-[30px] w-[106px] flex flex-col items-center text-[17.500px] leading-[24px] -tracking-[0.1px]"><span>11:48</span><span>2016-05-03</span></div>
  </div>
  <!-- video watermark -->
  <div class="absolute left-[26px] -top-[20px] flex items-end text-white/25 whitespace-pre">
    <span class="w-[117px] h-[56px] flex items-baseline font-bold text-white/30 rotate-3"><span class="w-[27px] text-[48px] leading-[56px]">b</span><span class="w-[25px] text-[36px] tracking-[-2px]">ili</span><span class="w-[27px] text-[48px] leading-[56px]">b</span><span class="w-[25px] text-[36px] tracking-[-2px]">ili</span></span>
    <span class="text-[30px] leading-[36px] tracking-[1.400px] mb-[2px]">av20674126 - 43:31</span>
  </div>
</footer>
</body>
</html>
